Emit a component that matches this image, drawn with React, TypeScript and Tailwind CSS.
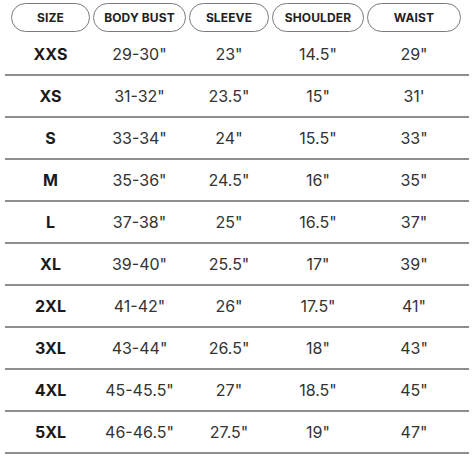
const headers = ["SIZE", "BODY BUST", "SLEEVE", "SHOULDER", "WAIST"]

const rows = [
  ["XXS", '29-30"', '23"', '14.5"', '29"'],
  ["XS", '31-32"', '23.5"', '15"', "31'"],
  ["S", '33-34"', '24"', '15.5"', '33"'],
  ["M", '35-36"', '24.5"', '16"', '35"'],
  ["L", '37-38"', '25"', '16.5"', '37"'],
  ["XL", '39-40"', '25.5"', '17"', '39"'],
  ["2XL", '41-42"', '26"', '17.5"', '41"'],
  ["3XL", '43-44"', '26.5"', '18"', '43"'],
  ["4XL", '45-45.5"', '27"', '18.5"', '45"'],
  ["5XL", '46-46.5"', '27.5"', '19"', '47"'],
]

const cols = "grid grid-cols-[79px_93px_80px_92px_94px] gap-x-[3px]"

export default function App() {
  return (
    <div className="w-[474px] h-[457px] bg-white text-[#222] font-['Inter','Liberation_Sans',sans-serif] overflow-hidden">
      <div className={`${cols} pl-[11px] pt-[3px]`}>
        {headers.map((h) => (
          <div
            key={h}
            className="h-[29px] rounded-full border border-[#7a7a7a] flex items-center justify-center text-[12px] font-bold tracking-[0.01em]"
          >
            {h}
          </div>
        ))}
      </div>
      <div className="mx-[5px] mt-[2px]">
        {rows.map((r) => (
          <div
            key={r[0]}
            className={`${cols} pl-[6px] h-[42px] items-center border-b-2 border-[#8e8e8e] text-[16px]`}
          >
            {r.map((c, i) => (
              <div
                key={i}
                className={`text-center ${i === 0 ? "font-bold text-[#1a1a1a]" : "text-[#333]"}`}
              >
                {c}
              </div>
            ))}
          </div>
        ))}
      </div>
    </div>
  )
}
